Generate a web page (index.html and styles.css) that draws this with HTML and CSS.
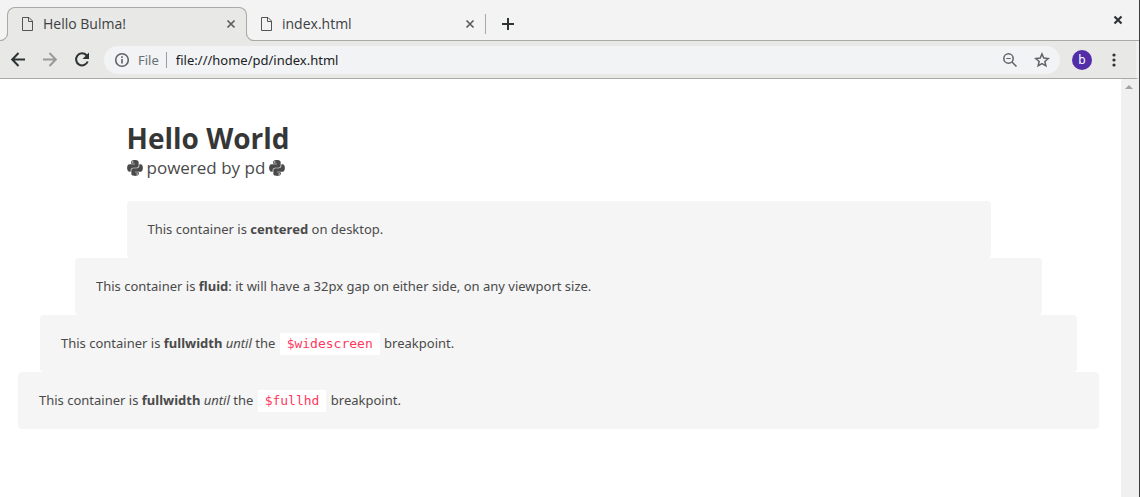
FILE: index.html
```html
<!DOCTYPE html>
<html lang="en">
<head>
<meta charset="utf-8">
<title>Hello Bulma!</title>
<link rel="stylesheet" href="styles.css">
</head>
<body>
<div class="window">
  <header class="tabbar">
    <div class="tab tab-active">
      <svg class="doc" viewBox="0 0 11 14"><path d="M.5.5h6.500l3.500 3.500v9.500H.5zM6.500.5v4H10.500"/></svg>
      <span class="tab-title">Hello Bulma!</span>
      <button class="icon-btn tab-close" aria-label="Close tab"><svg viewBox="0 0 10 10"><path d="M1.500 1.500l7 7M8.500 1.500l-7 7"/></svg></button>
    </div>
    <div class="tab">
      <svg class="doc" viewBox="0 0 11 14"><path d="M.5.5h6.500l3.500 3.500v9.500H.5zM6.500.5v4H10.500"/></svg>
      <span class="tab-title">index.html</span>
      <button class="icon-btn tab-close" aria-label="Close tab"><svg viewBox="0 0 10 10"><path d="M1.500 1.500l7 7M8.500 1.500l-7 7"/></svg></button>
    </div>
    <span class="tab-divider"></span>
    <button class="icon-btn new-tab" aria-label="New tab"><svg viewBox="0 0 12 12"><path d="M6 0v12M0 6h12"/></svg></button>
    <button class="icon-btn window-close" aria-label="Close window"><svg viewBox="0 0 10 10"><path d="M1.500 1.500l7 7M8.500 1.500l-7 7"/></svg></button>
  </header>
  <nav class="toolbar">
    <button class="icon-btn nav-btn" aria-label="Back"><svg viewBox="0 0 16 16"><path d="M15 7.500H2.500M8.500 1L2.200 7.500l6.300 6.500"/></svg></button>
    <button class="icon-btn nav-btn" aria-label="Forward" disabled><svg viewBox="0 0 16 16"><path d="M1 7.500h12.500M7.500 1l6.300 6.500L7.500 14"/></svg></button>
    <button class="icon-btn nav-btn" aria-label="Reload"><svg viewBox="0 0 16 16"><path d="M13.700 9.500A6 6 0 1 1 12.500 3.300L14 4.800"/><path class="fill" d="M15 .5v6.500H8.500z"/></svg></button>
    <div class="address">
      <svg class="info" viewBox="0 0 16 16"><circle cx="8" cy="8" r="6.300"/><path d="M8 7v4.500M8 4.200v1.700"/></svg>
      <label class="scheme" for="url">File</label>
      <input class="url" id="url" type="text" value="file:///home/pd/index.html">
      <button class="icon-btn address-btn" aria-label="Zoom"><svg viewBox="0 0 16 16"><circle cx="6.500" cy="6.500" r="4.700"/><path d="M10 10l4.500 4.500"/><path class="thin" d="M4.300 6.500h4.400"/></svg></button>
      <button class="icon-btn address-btn" aria-label="Bookmark"><svg viewBox="0 0 16 16"><path d="M8 2l1.750 4.100 4.450.4-3.350 2.950 1 4.350L8 11.500l-3.850 2.300 1-4.350L1.800 6.500l4.450-.4z"/></svg></button>
    </div>
    <button class="avatar" aria-label="Profile">b</button>
    <button class="icon-btn menu-btn" aria-label="Menu"><svg viewBox="0 0 4 14"><circle cx="2" cy="2" r="1.600"/><circle cx="2" cy="7" r="1.600"/><circle cx="2" cy="12" r="1.600"/></svg></button>
  </nav>
  <div class="viewport">
    <main class="page">
      <div class="container desktop heading">
        <h1 class="title">Hello World</h1>
        <p class="subtitle">
          <svg class="python" viewBox="0 0 448 512"><use href="#python"/></svg>
          <span>powered by pd</span>
          <svg class="python" viewBox="0 0 448 512"><path id="python" d="M439.800 200.500c-7.700-30.900-22.300-54.200-53.400-54.200h-40.100v47.400c0 36.800-31.200 67.800-66.800 67.800H172.700c-29.200 0-53.400 25-53.400 54.300v101.800c0 29 25.200 46 53.400 54.300 33.800 9.900 66.300 11.700 106.800 0 26.900-7.800 53.400-23.500 53.400-54.300v-40.700H226.200v-13.600h160.200c31.100 0 42.600-21.700 53.400-54.200 11.200-33.500 10.700-65.700 0-108.600zM286.200 404c11.100 0 20.100 9.100 20.100 20.300 0 11.300-9 20.400-20.100 20.400-11 0-20.100-9.200-20.100-20.400.1-11.300 9.100-20.300 20.100-20.300zM167.800 248.100h106.800c29.700 0 53.400-24.500 53.400-54.300V91.900c0-29-24.400-50.700-53.400-55.600-35.800-5.900-74.700-5.600-106.800.1-45.200 8-53.400 24.700-53.400 55.600v40.700h106.900v13.600h-147c-31.100 0-58.300 18.700-66.800 54.200-9.800 40.700-10.200 66.100 0 108.600 7.600 31.600 25.700 54.200 56.800 54.200H101v-48.800c0-35.300 30.500-66.400 66.800-66.400zm-6.700-142.600c-11.100 0-20.100-9.100-20.100-20.300.1-11.300 9-20.400 20.100-20.400 11 0 20.100 9.200 20.100 20.400s-9 20.300-20.100 20.300z"/></svg>
        </p>
      </div>
      <div class="container desktop notification">This container is <strong>centered</strong> on desktop.</div>
      <div class="container fluid notification">This container is <strong>fluid</strong>: it will have a 32px gap on either side, on any viewport size.</div>
      <div class="container widescreen notification">This container is <strong>fullwidth</strong> <em>until</em> the <code>$widescreen</code> breakpoint.</div>
      <div class="container fullhd notification">This container is <strong>fullwidth</strong> <em>until</em> the <code>$fullhd</code> breakpoint.</div>
    </main>
    <div class="scrollbar"><svg viewBox="0 0 8 4"><path d="M4 0l4 4H0z"/></svg></div>
  </div>
</div>
</body>
</html>
```
FILE: styles.css
```css
* { box-sizing: border-box; }
body {
  margin: 0;
  background: #fff;
  color: #4a4a4a;
  font-family: "Noto Sans", "Open Sans", sans-serif;
  font-size: 13px;
}
button, input { font: inherit; }
svg { display: block; fill: none; stroke: currentColor; }
.window {
  display: flex;
  flex-direction: column;
  min-height: 100vh;
  border-right: 1px solid #3c3c3c;
}
.icon-btn {
  display: block;
  flex: none;
  padding: 0;
  border: 0;
  background: none;
  color: #2e3436;
}

/* Tabs */
.tabbar {
  display: flex;
  align-items: flex-end;
  height: 41px;
  padding-left: 7px;
  border-bottom: 1px solid #a9aaa6;
  background: #f3f3f3;
  font-family: "Open Sans", "Noto Sans", sans-serif;
}
.tab {
  display: flex;
  align-items: center;
  gap: 10px;
  width: 238px;
  height: 33px;
  padding: 0 10px 0 14px;
  color: #3c4043;
}
.tab-active {
  position: relative;
  width: 240px;
  height: 34px;
  padding-bottom: 2px;
  margin-bottom: -1px;
  border: 1px solid #a9aaa6;
  border-bottom: 0;
  border-radius: 8px 8px 0 0;
  background: #e8e8e6;
}
.tab-active::before,
.tab-active::after {
  content: "";
  position: absolute;
  bottom: 0;
  width: 8px;
  height: 8px;
  border-bottom: 1px solid #a9aaa6;
}
.tab-active::before {
  right: 100%;
  border-right: 1px solid #a9aaa6;
  border-bottom-right-radius: 8px;
  box-shadow: 2px 2px 0 #e8e8e6;
}
.tab-active::after {
  left: 100%;
  border-left: 1px solid #a9aaa6;
  border-bottom-left-radius: 8px;
  box-shadow: -2px 2px 0 #e8e8e6;
}
.doc { width: 11px; height: 14px; stroke: #555; }
.tab-title { flex: 1; font-size: 14px; white-space: nowrap; }
.tab-close svg { width: 10px; height: 10px; stroke-width: 1.7; stroke: #5a5e60; }
.tab-divider { width: 1px; height: 20px; margin-bottom: 6px; background: #a9aaa6; }
.new-tab { margin: 0 0 10px 16px; }
.new-tab svg { width: 12px; height: 12px; stroke-width: 2; }
.window-close { margin: 0 16px 15px auto; }
.window-close svg { width: 10px; height: 10px; stroke-width: 2.2; }

/* Toolbar */
.toolbar {
  display: flex;
  align-items: center;
  height: 38px;
  padding: 0 20px 0 10px;
  border-bottom: 1px solid #a9aaa6;
  border-right: 3px solid #f0f0f0;
  background: #e8e8e6;
}
.nav-btn { margin-right: 16px; }
.nav-btn svg { width: 16px; height: 16px; stroke-width: 2; }
.nav-btn:disabled { color: #9a9b99; }
.nav-btn .fill { fill: currentColor; stroke: none; }
.address {
  display: flex;
  flex: 1;
  align-items: center;
  height: 28px;
  min-width: 0;
  margin: 0 12px 0 -2px;
  padding: 0 10px;
  border-radius: 14px;
  background: #f1f3f4;
}
.info { width: 16px; height: 16px; color: #5f6368; stroke-width: 1.6; }
.scheme {
  margin: 0 9px 0 8px;
  padding-right: 7px;
  border-right: 1px solid #9a9da0;
  color: #6b6f73;
  line-height: 16px;
}
.url {
  flex: 1;
  min-width: 0;
  padding: 0;
  border: 0;
  outline: 0;
  background: none;
  color: #202124;
}
.address-btn { margin-left: 16px; color: #5f6368; }
.address-btn svg { width: 16px; height: 16px; stroke-width: 1.5; }
.address-btn .thin { stroke-width: 1; }
.avatar {
  width: 20px;
  height: 20px;
  margin-right: 20px;
  padding: 0;
  border: 0;
  border-radius: 50%;
  background: #512da8;
  color: #fff;
  font-size: 12px;
  line-height: 20px;
}
.menu-btn svg { width: 4px; height: 14px; fill: currentColor; stroke: none; }

/* Page */
.viewport { display: flex; flex: 1; }
.page { flex: 1; padding: 40px 4px 0 0; }
.scrollbar { width: 18px; padding: 6px 6px 0 4px; background: #f0f0f0; }
.scrollbar svg { width: 8px; height: 4px; fill: #a3a3a3; stroke: none; }
.container { margin: 0 auto; }
.desktop { max-width: 864px; }
.fluid { max-width: 967px; }
.widescreen { max-width: 1037px; }
.fullhd { max-width: 1081px; }
.heading {
  padding-bottom: 22px;
  font-family: "Open Sans", "Noto Sans", sans-serif;
}
.title {
  margin: 0;
  color: #363636;
  font-size: 28px;
  font-weight: 700;
  line-height: 38px;
}
.subtitle {
  display: flex;
  align-items: center;
  gap: 4px;
  margin: 0;
  font-size: 17px;
  line-height: 22px;
}
.python { width: 16px; height: 18px; fill: currentColor; stroke: none; }
.notification {
  padding: 18px 21px;
  border-radius: 4px;
  background: #f5f5f5;
  line-height: 21px;
}
.notification strong { font-weight: 700; }
code {
  margin: 0 1px;
  padding: 3px 7px 4px;
  background: #fff;
  color: #ff3860;
  font-family: "DejaVu Sans Mono", monospace;
  font-size: 13px;
}
```
